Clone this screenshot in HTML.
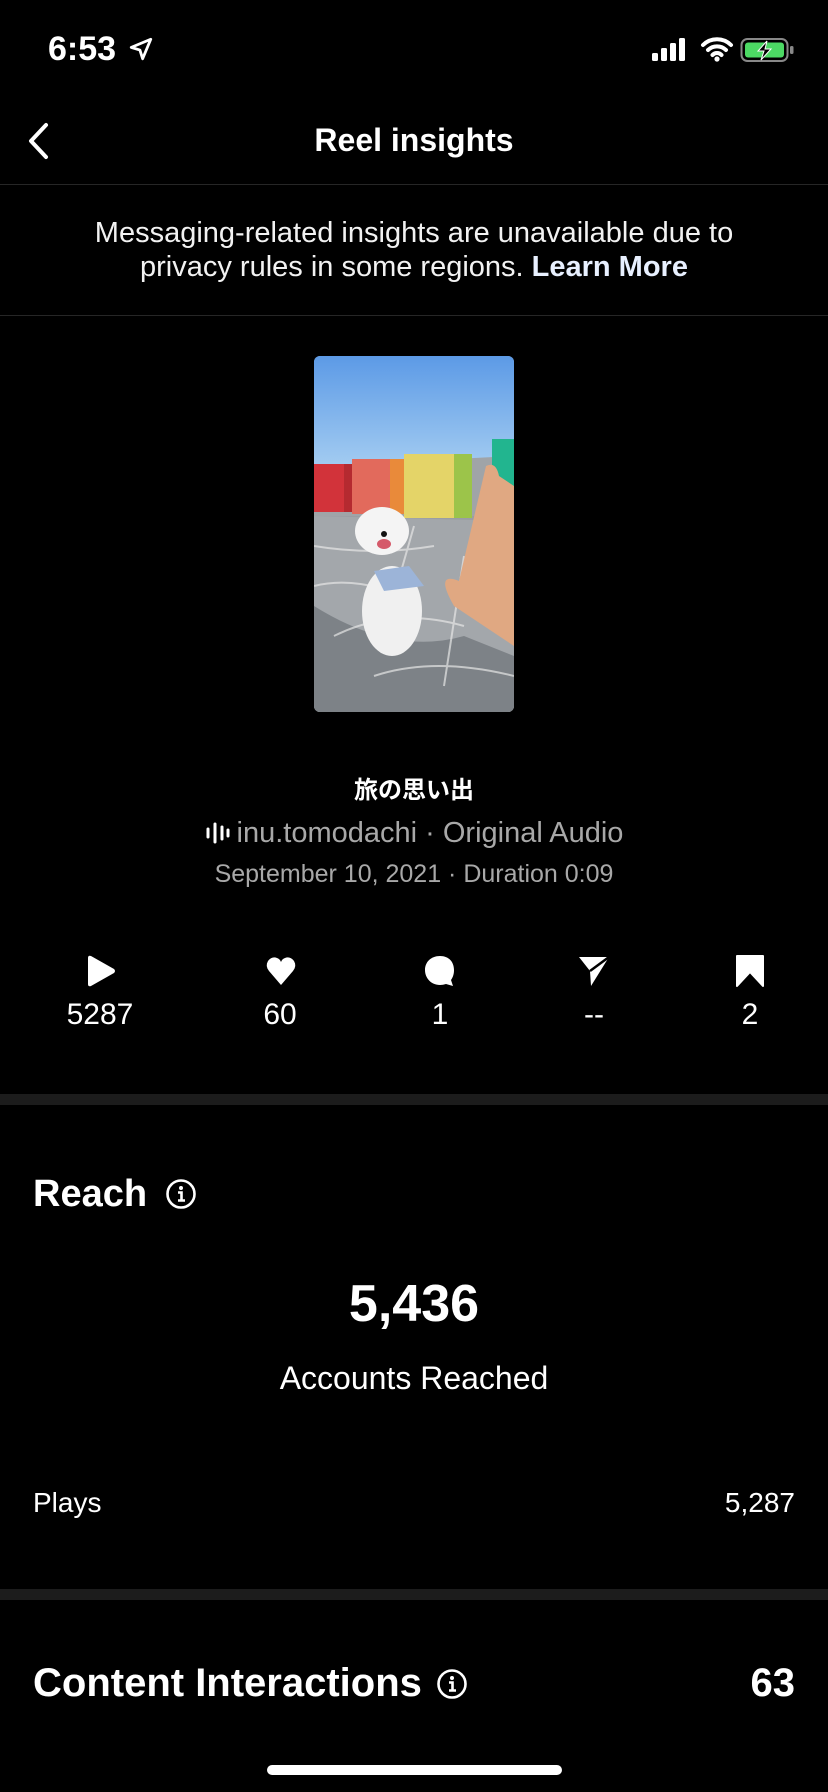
<!DOCTYPE html>
<html><head><meta charset="utf-8">
<style>
*{margin:0;padding:0;box-sizing:border-box}
body{width:828px;height:1792px;background:#000;color:#fff;font-family:"Liberation Sans","Noto Sans CJK JP",sans-serif;position:relative;overflow:hidden}
.a{position:absolute}
.c{left:0;width:828px;text-align:center}
.hr{position:absolute;left:0;width:828px;height:1px;background:#262626}
.thick{position:absolute;left:0;width:828px;height:11px;background:#1c1c1c}
.num{position:absolute;top:998px;font-size:30px;width:120px;text-align:center}
.ic{position:absolute;top:954px}
</style></head><body>
<div class="a" style="left:48px;top:30px;font-size:34px;font-weight:600">6:53</div>
<svg class="a" style="left:128px;top:36px" width="26" height="26" viewBox="0 0 24 24"><path d="M21 3L3 10.5l8 2.5 2.5 8z" fill="none" stroke="#fff" stroke-width="2.6" stroke-linejoin="round"/></svg>
<svg class="a" style="left:652px;top:38px" width="40" height="24" viewBox="0 0 40 24"><rect x="0" y="15" width="6" height="8" rx="1.5" fill="#fff"/><rect x="9" y="10" width="6" height="13" rx="1.5" fill="#fff"/><rect x="18" y="5" width="6" height="18" rx="1.5" fill="#fff"/><rect x="27" y="0" width="6" height="23" rx="1.5" fill="#fff"/></svg>
<svg class="a" style="left:700px;top:36px" width="34" height="26" viewBox="0 0 34 26"><path d="M3 9a20 20 0 0 1 28 0M8 14a13 13 0 0 1 18 0M12.5 19a6 6 0 0 1 9 0" fill="none" stroke="#fff" stroke-width="4" stroke-linecap="round"/><circle cx="17" cy="23" r="2.6" fill="#fff"/></svg>
<svg class="a" style="left:740px;top:36px" width="56" height="28" viewBox="0 0 56 28"><rect x="1.5" y="3" width="46" height="22" rx="6" fill="none" stroke="#888" stroke-width="2"/><rect x="5" y="6.5" width="39" height="15" rx="3" fill="#4cd964"/><rect x="50" y="10" width="3.5" height="8" rx="1.5" fill="#888"/><path d="M27 5l-9 10h6l-3 9 10-11h-6z" fill="#000" stroke="#fff" stroke-width="1"/></svg>
<svg class="a" style="left:26px;top:122px" width="26" height="38" viewBox="0 0 26 38"><path d="M20 3L5 19l15 16" fill="none" stroke="#fff" stroke-width="4" stroke-linecap="round" stroke-linejoin="round"/></svg>
<div class="a c" style="top:122px;font-size:32px;font-weight:700">Reel insights</div>
<div class="hr" style="top:184px"></div>
<div class="a c" style="top:216px;font-size:29px;line-height:34px;color:#f2f2f2">Messaging-related insights are unavailable due to<br>privacy rules in some regions. <b style="color:#e8f0ff">Learn More</b></div>
<div class="hr" style="top:315px"></div>
<svg class="a" style="left:314px;top:356px;border-radius:6px" width="200" height="356" viewBox="0 0 200 356">
<defs><linearGradient id="s" x1="0" y1="0" x2="0" y2="1"><stop offset="0" stop-color="#5c9ae6"/><stop offset="1" stop-color="#a9d0f2"/></linearGradient></defs>
<rect width="200" height="356" fill="#9a9ea3"/>
<rect width="200" height="120" fill="url(#s)"/>
<path d="M0 110L200 100V160H0z" fill="#a0a4a8"/>
<rect x="0" y="108" width="38" height="48" fill="#d2333a"/><rect x="30" y="108" width="8" height="48" fill="#b52a30"/>
<rect x="38" y="103" width="43" height="55" fill="#e26a5c"/><rect x="76" y="103" width="14" height="55" fill="#e98a3a"/>
<rect x="90" y="98" width="65" height="64" fill="#e4d468"/><rect x="140" y="98" width="18" height="64" fill="#9cc44a"/>
<rect x="178" y="83" width="22" height="80" fill="#22b58f"/>
<path d="M0 160L200 165V356H0z" fill="#a3a7ab"/>
<path d="M0 250Q80 300 150 280L200 300V356H0z" fill="#7d8287"/>
<g stroke="#e6e6e6" stroke-width="2" fill="none" opacity=".7"><path d="M0 190Q60 200 120 190M0 230Q40 220 90 240M20 280Q80 250 150 270M60 320Q120 300 200 320M100 170L80 240M150 200L130 330"/></g>
<ellipse cx="68" cy="175" rx="27" ry="24" fill="#f4f4f4"/>
<ellipse cx="78" cy="255" rx="30" ry="45" fill="#f0f0f0"/>
<path d="M60 215l35 -5l15 20l-40 5z" fill="#9cb4d8"/>
<ellipse cx="70" cy="188" rx="7" ry="5" fill="#d55a6a"/><circle cx="70" cy="178" r="3" fill="#111"/>
<path d="M145 225L172 110Q182 105 185 120L200 130V290Q170 270 140 250Q120 215 145 225z" fill="#e0a882"/>
</svg>
<div class="a c" style="top:770px;font-size:24px;font-weight:700">旅の思い出</div>
<div class="a c" style="top:817px;font-size:29px;color:#a8a8a8"><svg width="26" height="24" viewBox="0 0 26 24" style="vertical-align:-3px;margin-right:6px"><g stroke="#fff" stroke-width="3" stroke-linecap="round"><path d="M3 8v8M10 3v18M17 6v12M23 9v6"/></g></svg>inu.tomodachi · Original Audio</div>
<div class="a c" style="top:860px;font-size:25px;color:#a8a8a8">September 10, 2021 · Duration 0:09</div>
<svg class="ic" style="left:84px" width="34" height="34" viewBox="0 0 34 34"><path d="M4 4Q4 1 7 2L30 15Q32 17 30 19L7 32Q4 33 4 30z" fill="#fff"/></svg>
<svg class="ic" style="left:264px" width="34" height="34" viewBox="0 0 34 34"><path d="M17 31L5 17Q1 12 4 7Q8 2 13 4Q16 5 17 8Q18 5 21 4Q26 2 30 7Q33 12 29 17z" fill="#fff"/></svg>
<svg class="ic" style="left:423px" width="34" height="34" viewBox="0 0 34 34"><path d="M17 2C8 2 2 8 2 16s6 15 15 15c2 0 4-.5 6-1l7 2-2-6c2-3 3-6 3-10C31 8 26 2 17 2z" fill="#fff"/></svg>
<svg class="ic" style="left:577px" width="34" height="34" viewBox="0 0 34 34"><path d="M2 3L32 3L14 32L13 17z" fill="#fff"/><path d="M13 17L32 3" stroke="#000" stroke-width="2.5"/></svg>
<svg class="ic" style="left:734px" width="32" height="34" viewBox="0 0 32 34"><path d="M3 2H29V32L16 18L3 32z" fill="#fff" stroke="#fff" stroke-linejoin="round" stroke-width="2"/></svg>
<div class="num" style="left:40px">5287</div>
<div class="num" style="left:220px">60</div>
<div class="num" style="left:380px">1</div>
<div class="num" style="left:534px">--</div>
<div class="num" style="left:690px">2</div>
<div class="thick" style="top:1094px"></div>
<div class="a" style="left:33px;top:1173px;font-size:38px;font-weight:700">Reach</div>
<svg class="a" style="left:165px;top:1178px" width="32" height="32" viewBox="0 0 32 32"><circle cx="16" cy="16" r="13.5" fill="none" stroke="#fff" stroke-width="2.6"/><circle cx="16" cy="10" r="2" fill="#fff"/><path d="M13 14.5h3.5v8M13 22.5h7" stroke="#fff" stroke-width="2.6" fill="none"/></svg>
<div class="a c" style="top:1274px;font-size:52px;font-weight:600">5,436</div>
<div class="a c" style="top:1360px;font-size:32px">Accounts Reached</div>
<div class="a" style="left:33px;top:1487px;font-size:28px">Plays</div>
<div class="a" style="right:33px;top:1487px;font-size:28px">5,287</div>
<div class="thick" style="top:1589px"></div>
<div class="a" style="left:33px;top:1661px;font-size:40px;font-weight:700">Content Interactions</div>
<svg class="a" style="left:436px;top:1668px" width="32" height="32" viewBox="0 0 32 32"><circle cx="16" cy="16" r="13.5" fill="none" stroke="#fff" stroke-width="2.6"/><circle cx="16" cy="10" r="2" fill="#fff"/><path d="M13 14.5h3.5v8M13 22.5h7" stroke="#fff" stroke-width="2.6" fill="none"/></svg>
<div class="a" style="right:33px;top:1661px;font-size:40px;font-weight:700">63</div>
<div class="a" style="left:267px;top:1765px;width:295px;height:10px;border-radius:5px;background:#fff"></div>
</body></html>
